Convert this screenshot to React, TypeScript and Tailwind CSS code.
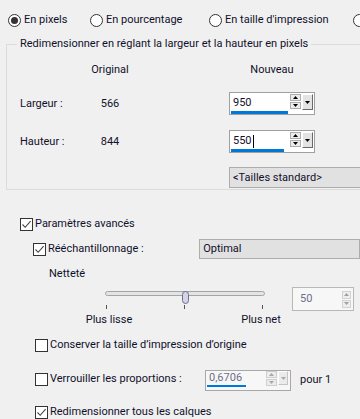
import React from "react";

function Radio({ checked, label, w }: { checked?: boolean; label: string; w: string }) {
  return (
    <div className={`flex items-center gap-[3px] shrink-0 ${w}`}>
      <span className="w-[13px] h-[13px] rounded-full border border-[#333] bg-white flex items-center justify-center shrink-0">
        {checked && <span className="w-[7px] h-[7px] rounded-full bg-[#333]" />}
      </span>
      <span className="whitespace-nowrap">{label}</span>
    </div>
  );
}

function Check({ checked }: { checked?: boolean }) {
  return (
    <span className="w-[13px] h-[13px] border border-[#333] bg-white flex items-center justify-center shrink-0">
      {checked && (
        <svg width="11" height="11" viewBox="0 0 11 11">
          <path d="M1.5 5.5 L4.2 8.3 L9.6 2.2" stroke="#444" strokeWidth="1.1" fill="none" />
        </svg>
      )}
    </span>
  );
}

function Arrow({ up, color = "#000" }: { up?: boolean; color?: string }) {
  return (
    <svg width="5" height="3" viewBox="0 0 5 3">
      <path d={up ? "M0 3 L5 3 L2.5 0 Z" : "M0 0 L5 0 L2.5 3 Z"} fill={color} />
    </svg>
  );
}

function SpinButtons({ disabled }: { disabled?: boolean }) {
  const c = disabled ? "#a8a8a8" : "#000";
  const b = disabled ? "border-[#cfcfcf]" : "border-[#adadad]";
  return (
    <div className="flex gap-[1px] items-start">
      <div className="flex flex-col gap-[1px]">
        <div className={`w-[11px] h-[7px] border ${b} bg-[#ececec] flex items-center justify-center`}>
          <Arrow up color={c} />
        </div>
        <div className={`w-[11px] h-[7px] border ${b} bg-[#ececec] flex items-center justify-center`}>
          <Arrow color={c} />
        </div>
      </div>
      <div
        className={
          disabled
            ? "w-[10px] h-[14px] border border-t-white border-l-white border-r-[#c4c4c4] border-b-[#c4c4c4] bg-[#ebebeb] flex items-center justify-center"
            : "w-[11px] h-[16px] border border-t-white border-l-white border-r-[#696969] border-b-[#696969] bg-[#e3e3e3] flex items-center justify-center"
        }
      >
        <Arrow color={c} />
      </div>
    </div>
  );
}

export default function App() {
  return (
    <div className="w-[360px] h-[419px] overflow-hidden bg-[#f0f0f0] text-[11px] leading-[16px] text-[#10102c] font-['Roboto','Noto_Sans',sans-serif]">
      {/* unit radios */}
      <div className="flex items-center pl-[8px] pt-[12px] h-[28px]">
        <Radio checked label="En pixels" w="w-[82px]" />
        <Radio label="En pourcentage" w="w-[119px]" />
        <Radio label="En taille d'impression" w="w-[144px]" />
        <Radio label="En résolution" w="w-[60px]" />
      </div>

      {/* group box */}
      <fieldset className="ml-[6px] mt-[8px] w-[380px] border border-[#dcdcdc] pb-[1px]">
        <legend className="ml-[10px] px-[3px] h-[16px]">
          Redimensionner en réglant la largeur et la hauteur en pixels
        </legend>
        <div className="grid grid-cols-[72px_62px_88px_86px] items-center">
          <div className="col-start-2 text-center mt-[10px]">Original</div>
          <div className="col-start-4 text-center mt-[10px]">Nouveau</div>

          <div className="col-start-1 pl-[13px] mt-[14px]">Largeur :</div>
          <div className="text-center mt-[14px]">566</div>
          <div className="col-start-4 mt-[14px] h-[23px] border border-[#a0a0a0] bg-white flex">
            <div className="flex-1 pl-[1px] pt-[2px] flex flex-col">
              <span className="pl-[2px] h-[16px]">950</span>
              <span className="h-[3px] w-[57px] bg-[#0078d7]" />
            </div>
            <div className="pt-[1px] pr-[1px]">
              <SpinButtons />
            </div>
          </div>

          <div className="col-start-1 pl-[13px] mt-[15px]">Hauteur :</div>
          <div className="text-center mt-[15px]">844</div>
          <div className="col-start-4 mt-[15px] h-[23px] border border-[#a0a0a0] bg-white flex">
            <div className="flex-1 pl-[1px] pt-[2px] flex flex-col">
              <span className="pl-[2px] h-[16px] flex items-center">
                550<span className="ml-[1px] w-[1px] h-[13px] bg-black" />
              </span>
              <span className="h-[3px] w-[53px] bg-[#0078d7]" />
            </div>
            <div className="pt-[1px] pr-[1px]">
              <SpinButtons />
            </div>
          </div>

          <div className="col-start-4 col-span-1 mt-[14px] h-[21px] w-[160px] border border-[#adadad] bg-[#e1e1e1] pl-[3px] flex items-center">
            &lt;Tailles standard&gt;
          </div>
        </div>
      </fieldset>

      {/* advanced */}
      <div className="flex items-center gap-[2px] pl-[20px] mt-[26px] h-[16px]">
        <Check checked />
        <span>Paramètres avancés</span>
      </div>

      <div className="flex items-center mt-[7px] h-[20px]">
        <div className="w-[209px] pl-[33px] flex items-center gap-[2px]">
          <Check checked />
          <span>Rééchantillonnage :</span>
        </div>
        <div className="w-[170px] h-[20px] border border-[#adadad] bg-[#e1e1e1] pl-[3px] flex items-center">
          Optimal
        </div>
      </div>

      <div className="pl-[49px] mt-[7px] h-[16px]">Netteté</div>

      {/* slider */}
      <div className="flex items-start mt-[5px]">
        <div className="w-[105px] shrink-0" />
        <div className="w-[160px] shrink-0">
          <div className="relative h-[13px]">
            <div className="mt-[4px] h-[5px] rounded-full border border-[#a4a4a4] bg-[#e4e4e4]" />
            <div className="absolute left-[77px] top-0 w-[7px] h-[13px] rounded-full border border-[#6e6e8e] bg-[#d4d4e6]" />
          </div>
          <div className="mt-[1px] h-[4px] flex justify-between pl-[1px] pr-[2px]">
            <span className="w-[1px] h-[4px] bg-[#555]" />
            <span className="w-[1px] h-[4px] bg-[#555]" />
            <span className="w-[1px] h-[4px] bg-[#555]" />
          </div>
          <div className="mt-[3px] flex justify-between px-[4px] h-[16px]">
            <span className="w-0 flex justify-center whitespace-nowrap">Plus lisse</span>
            <span className="w-0 flex justify-center whitespace-nowrap">Plus net</span>
          </div>
        </div>
        <div className="ml-[27px] w-[62px] h-[24px] border border-[#b8b8b8] bg-[#f7f7f7] flex items-center justify-between pl-[7px] pr-[2px]">
          <span className="text-[#6e6e8a]">50</span>
          <div className="flex flex-col gap-[1px]">
            <div className="w-[9px] h-[8px] border border-[#d2d2d2] bg-[#eeeeee] flex items-center justify-center">
              <Arrow up color="#a0a0a0" />
            </div>
            <div className="w-[9px] h-[8px] border border-[#d2d2d2] bg-[#eeeeee] flex items-center justify-center">
              <Arrow color="#a0a0a0" />
            </div>
          </div>
        </div>
      </div>

      <div className="flex items-center gap-[2px] pl-[35px] mt-[9px] h-[16px]">
        <Check />
        <span>Conserver la taille d’impression d’origine</span>
      </div>

      <div className="flex items-start mt-[17px] h-[21px]">
        <div className="w-[205px] pl-[35px] flex items-center gap-[2px] mt-[1px]">
          <Check />
          <span>Verrouiller les proportions :</span>
        </div>
        <div className="w-[86px] h-[21px] border border-[#a8a8a8] bg-[#f7f7f7] flex">
          <div className="flex-1 pl-[1px] flex flex-col">
            <span className="pl-[2px] h-[14px] leading-[14px] text-[#6e6e8a]">0,6706</span>
            <span className="h-[2px] w-[39px] bg-[#0078d7]" />
          </div>
          <div className="pr-[2px]">
            <SpinButtons disabled />
          </div>
        </div>
        <span className="ml-[9px] mt-[2px]">pour 1</span>
      </div>

      <div className="flex items-center gap-[2px] pl-[35px] mt-[13px] h-[16px]">
        <Check checked />
        <span>Redimensionner tous les calques</span>
      </div>
    </div>
  );
}
